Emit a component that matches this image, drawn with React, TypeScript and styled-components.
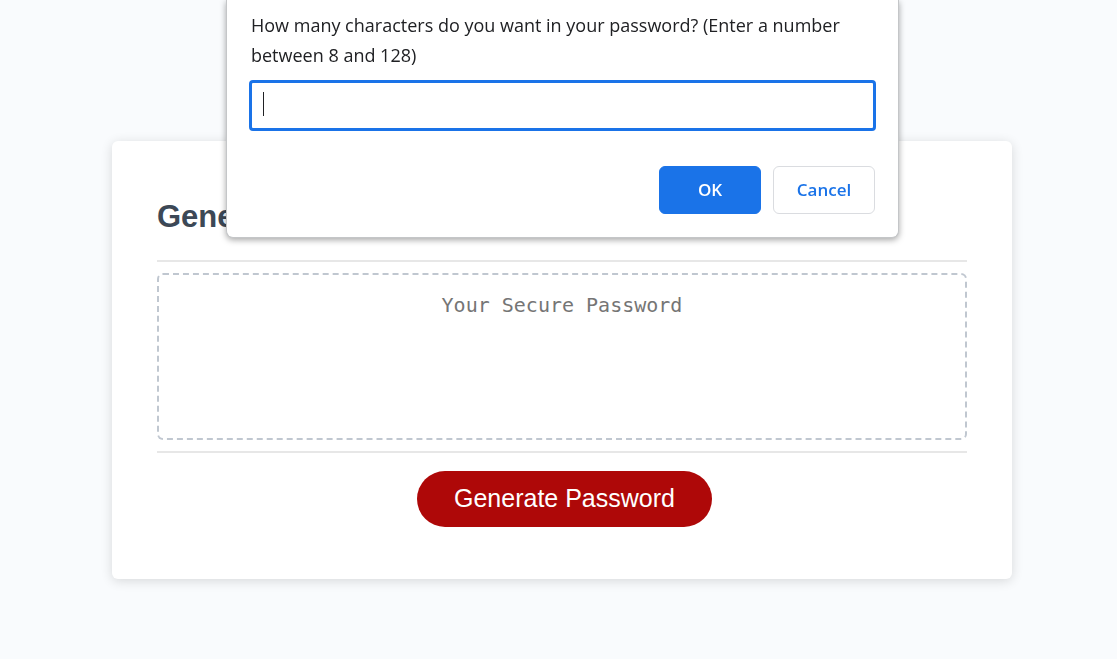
import React from "react";
import styled, { createGlobalStyle } from "styled-components";

const GlobalStyle = createGlobalStyle`
  *, *::before, *::after { box-sizing: border-box; }
  html, body, #root { min-height: 100%; }
  body {
    margin: 0;
    background: #f9fbfd;
    font-family: Arial, "Liberation Sans", sans-serif;
    color: #3c4856;
  }
`;

const Page = styled.main`
  padding: 141px 0 40px 7px;
`;

const Card = styled.section`
  width: calc(100% - 32px);
  max-width: 900px;
  margin: 0 auto;
  padding: 56px 45px 52px;
  background: #fff;
  border-radius: 6px;
  box-shadow: 0 2px 12px rgba(0, 0, 0, 0.14);
`;

const CardTitle = styled.h2`
  margin: 0;
  font-size: 31px;
  line-height: 40px;
  padding-bottom: 23px;
`;

const CardBody = styled.div`
  border: solid #e7e7e7;
  border-width: 2px 0;
  padding: 11px 0;
`;

const PasswordBox = styled.textarea`
  display: block;
  width: 100%;
  height: 167px;
  padding: 18px;
  border: 2px dashed #c0c7d0;
  border-radius: 6px;
  background: #fff;
  resize: none;
  overflow: hidden;
  text-align: center;
  font-family: "DejaVu Sans Mono", monospace;
  font-size: 20px;
  line-height: 24px;
  color: #3c4856;

  &::placeholder {
    color: #757575;
    opacity: 1;
  }
`;

const CardFooter = styled.div`
  display: flex;
  justify-content: center;
  padding: 18px 0 0 5px;
`;

const GenerateButton = styled.button`
  height: 56px;
  padding: 0 37px 2px;
  border: 0;
  border-radius: 28px;
  background: #ae0808;
  color: #fff;
  font-family: inherit;
  font-size: 25px;
  cursor: pointer;
`;

const PromptLayer = styled.div`
  position: fixed;
  inset: 0 0 auto 0;
  display: flex;
  justify-content: center;
  padding: 0 0 0 8px;
`;

const Prompt = styled.form`
  width: 673px;
  max-width: 100%;
  padding: 10px 23px 23px;
  background: #fff;
  border: solid #c4c6c8;
  border-width: 0 1px 1px;
  border-radius: 0 0 7px 7px;
  box-shadow: 0 2px 6px rgba(0, 0, 0, 0.35);
  font-family: "Open Sans", sans-serif;
`;

const PromptLabel = styled.label`
  display: block;
  padding-left: 1px;
  font-size: 18px;
  line-height: 30px;
  color: #202124;
`;

const Field = styled.div`
  position: relative;
  margin: 10px -1px 0;
`;

const PromptInput = styled.input`
  display: block;
  width: 100%;
  height: 51px;
  padding: 0 12px;
  border: 3px solid #1a73e8;
  border-radius: 4px;
  outline: none;
  background: #fff;
  color: #202124;
  caret-color: transparent;
  font-family: inherit;
  font-size: 18px;
`;

const Caret = styled.span`
  position: absolute;
  top: 12px;
  left: 14px;
  width: 1px;
  height: 24px;
  background: #202124;
  pointer-events: none;
`;

const Actions = styled.div`
  display: flex;
  justify-content: flex-end;
  gap: 12px;
  margin-top: 35px;
`;

const ActionButton = styled.button<{ $primary?: boolean }>`
  width: 102px;
  height: 48px;
  padding: 0 0 2px;
  border: 1px solid ${(p) => (p.$primary ? "#1a73e8" : "#dadce0")};
  border-radius: 6px;
  background: ${(p) => (p.$primary ? "#1a73e8" : "#fff")};
  color: ${(p) => (p.$primary ? "#fff" : "#1a73e8")};
  font-family: inherit;
  font-size: 17px;
  font-weight: 600;
  cursor: pointer;
`;

export default function App() {
  return (
    <>
      <GlobalStyle />
      <Page>
        <Card>
          <CardTitle>Generate a Password</CardTitle>
          <CardBody>
            <PasswordBox
              readOnly
              placeholder="Your Secure Password"
              aria-label="Your Secure Password"
            />
          </CardBody>
          <CardFooter>
            <GenerateButton type="button">Generate Password</GenerateButton>
          </CardFooter>
        </Card>
      </Page>
      <PromptLayer>
        <Prompt role="dialog" onSubmit={(e) => e.preventDefault()}>
          <PromptLabel htmlFor="length">
            How many characters do you want in your password? (Enter a number
            between 8 and 128)
          </PromptLabel>
          <Field>
            <PromptInput id="length" type="text" autoComplete="off" />
            <Caret />
          </Field>
          <Actions>
            <ActionButton type="submit" $primary>
              OK
            </ActionButton>
            <ActionButton type="button">Cancel</ActionButton>
          </Actions>
        </Prompt>
      </PromptLayer>
    </>
  );
}
